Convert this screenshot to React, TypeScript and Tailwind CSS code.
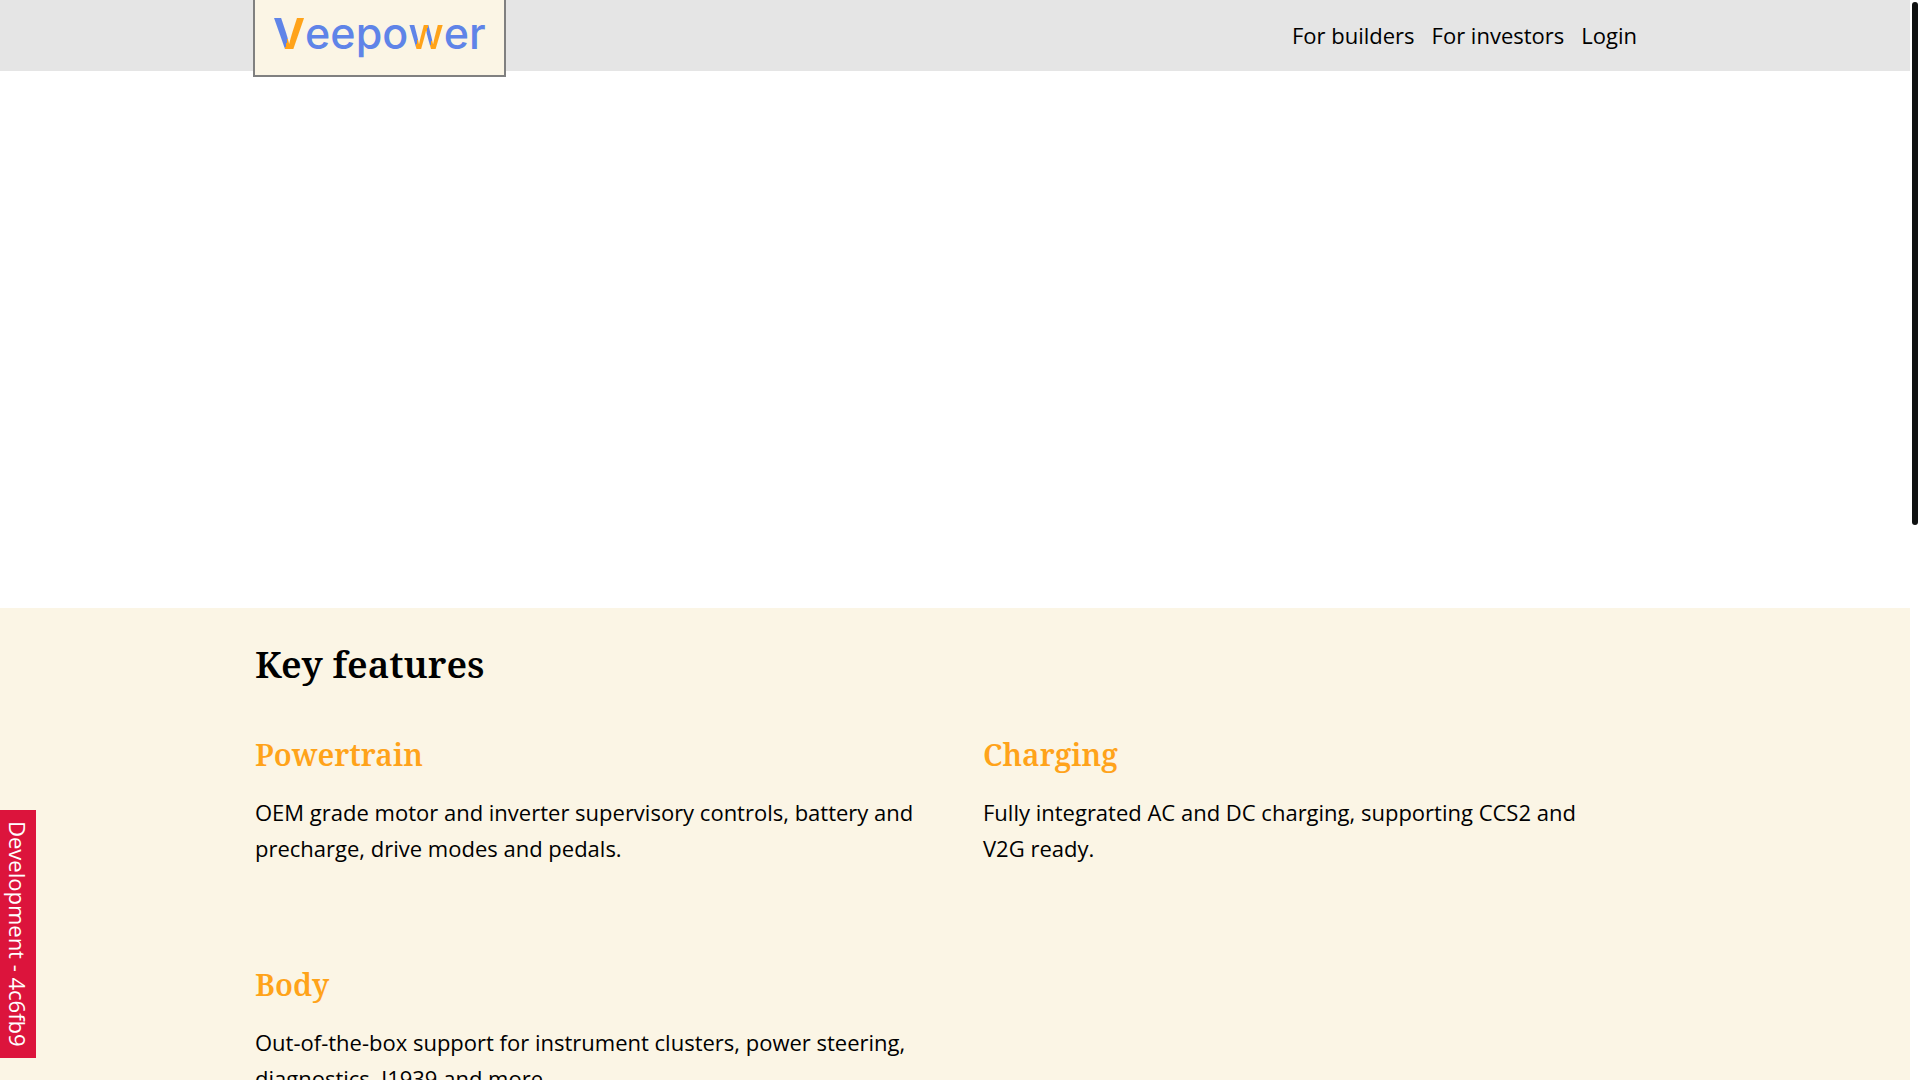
interface Feature {
  title: string;
  text: string;
}

const links = ["For builders", "For investors", "Login"];

const features: Feature[] = [
  {
    title: "Powertrain",
    text: "OEM grade motor and inverter supervisory controls, battery and precharge, drive modes and pedals.",
  },
  {
    title: "Charging",
    text: "Fully integrated AC and DC charging, supporting CCS2 and V2G ready.",
  },
  {
    title: "Body",
    text: "Out-of-the-box support for instrument clusters, power steering, diagnostics, J1939 and more.",
  },
];

function Logo() {
  return (
    <a
      href="#"
      className="-ml-[2px] flex h-[77px] items-start border-2 border-t-0 border-[#808080] bg-[#fbf5e5] px-[18px] pt-[12px] font-['Inter',sans-serif] text-[43px] leading-none font-medium text-[#5f84e8]"
    >
      <span className="bg-[linear-gradient(105deg,#5f84e8_50%,#ffa31a_50%)] bg-clip-text font-bold text-transparent">
        V
      </span>
      <span>eepo</span>
      <span className="bg-[linear-gradient(105deg,#5f84e8_36%,#ffa31a_36%,#ffa31a_50%,#5f84e8_50%,#5f84e8_66%,#ffa31a_66%)] bg-clip-text text-transparent">
        w
      </span>
      <span>er</span>
    </a>
  );
}

function Header() {
  return (
    <header className="h-[71px] bg-[#e5e5e5]">
      <div className="mx-auto flex max-w-[1400px] items-start justify-between">
        <Logo />
        <nav className="flex h-[70px] items-center gap-[17px] pr-[18px]">
          {links.map((link) => (
            <a key={link} href="#">
              {link}
            </a>
          ))}
        </nav>
      </div>
    </header>
  );
}

function FeatureItem({ feature }: { feature: Feature }) {
  return (
    <article className="pb-[76px]">
      <h3 className="mb-[14px] font-['Noto_Serif',serif] text-[30px] leading-[50px] font-semibold text-[#ffa31a]">
        {feature.title}
      </h3>
      <p className="text-pretty">{feature.text}</p>
    </article>
  );
}

export default function App() {
  return (
    <div className="flex h-screen overflow-hidden bg-white font-['Open_Sans','Noto_Sans',sans-serif] text-[22px] leading-[36px] text-black">
      <div className="min-w-0 flex-1">
        <Header />
        <main>
          <div className="h-[537px]" />
          <section className="bg-[#fbf5e5] py-[28px]">
            <div className="mx-auto max-w-[1400px]">
              <h2 className="mb-[38px] font-['Noto_Serif',serif] text-[37px] leading-[56px] font-semibold">
                Key features
              </h2>
              <div className="grid grid-cols-2 gap-x-[56px] gap-y-[18px]">
                {features.map((feature) => (
                  <FeatureItem key={feature.title} feature={feature} />
                ))}
              </div>
            </div>
          </section>
        </main>
      </div>
      <div className="w-[10px] p-[2px]">
        <div className="h-[48.6%] w-[6px] rounded-full bg-[#0f1111]" />
      </div>
      <div className="fixed bottom-[22px] left-0 bg-[#dc143c] pt-[11px] pb-[11px] text-white [writing-mode:vertical-rl]">
        Development - 4c6fb9
      </div>
    </div>
  );
}
